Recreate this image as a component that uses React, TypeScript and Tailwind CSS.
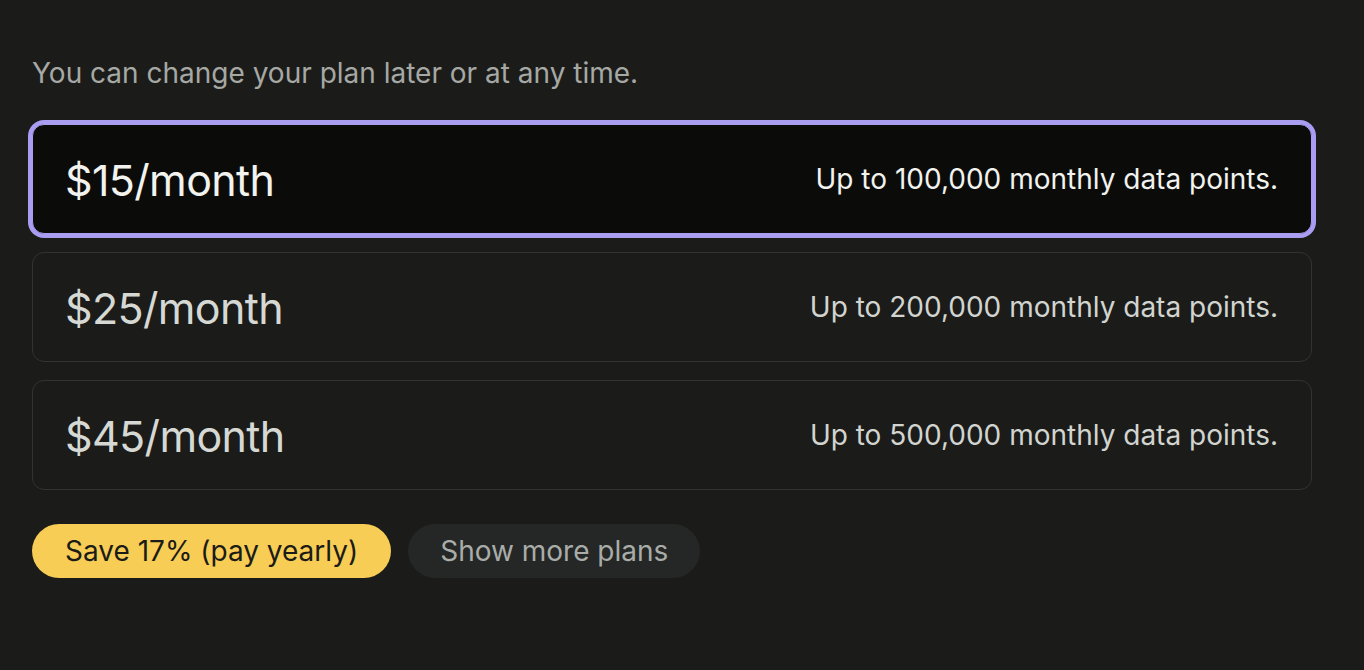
import React from "react";

const plans = [
  { price: "$15/month", desc: "Up to 100,000 monthly data points.", selected: true },
  { price: "$25/month", desc: "Up to 200,000 monthly data points.", selected: false },
  { price: "$45/month", desc: "Up to 500,000 monthly data points.", selected: false },
];

export default function App() {
  return (
    <div
      className="min-h-[670px] w-full bg-[#1b1c1a] pl-8 pr-[52px] pt-[55px]"
      style={{ fontFamily: "Inter, 'Noto Sans', sans-serif" }}
    >
      <p className="text-[28px] leading-9 text-[#a6a8a4]">
        You can change your plan later or at any time.
      </p>
      <div className="mt-[33px] flex flex-col gap-[18px]">
        {plans.map((p) => (
          <div
            key={p.price}
            className={
              p.selected
                ? "flex h-[110px] items-center justify-between rounded-xl border border-[#a99df2] bg-[#0b0c0a] pl-8 pr-[33px] ring-[4px] ring-[#a99df2]"
                : "flex h-[110px] items-center justify-between rounded-xl border border-[#333431] bg-[#1b1c1a] pl-8 pr-[33px]"
            }
          >
            <span
              className={
                p.selected
                  ? "pt-[3px] text-[43px] leading-none tracking-[-0.65px] text-[#f2f2ee]"
                  : "pt-[3px] text-[43px] leading-none tracking-[-0.65px] text-[#d6d8d4]"
              }
            >
              {p.price}
            </span>
            <span
              className={
                p.selected
                  ? "text-[28px] leading-none text-[#f2f2ee]"
                  : "text-[28px] leading-none text-[#d2d4d0]"
              }
            >
              {p.desc}
            </span>
          </div>
        ))}
      </div>
      <div className="mt-[34px] flex gap-[17px]">
        <button className="rounded-full bg-[#f7cd55] px-[33px] py-[9px] text-[28px] leading-9 text-[#1b1b17]">
          Save 17% (pay yearly)
        </button>
        <button className="rounded-full bg-[#242725] px-8 py-[9px] text-[28px] leading-9 text-[#a9aca8]">
          Show more plans
        </button>
      </div>
    </div>
  );
}
